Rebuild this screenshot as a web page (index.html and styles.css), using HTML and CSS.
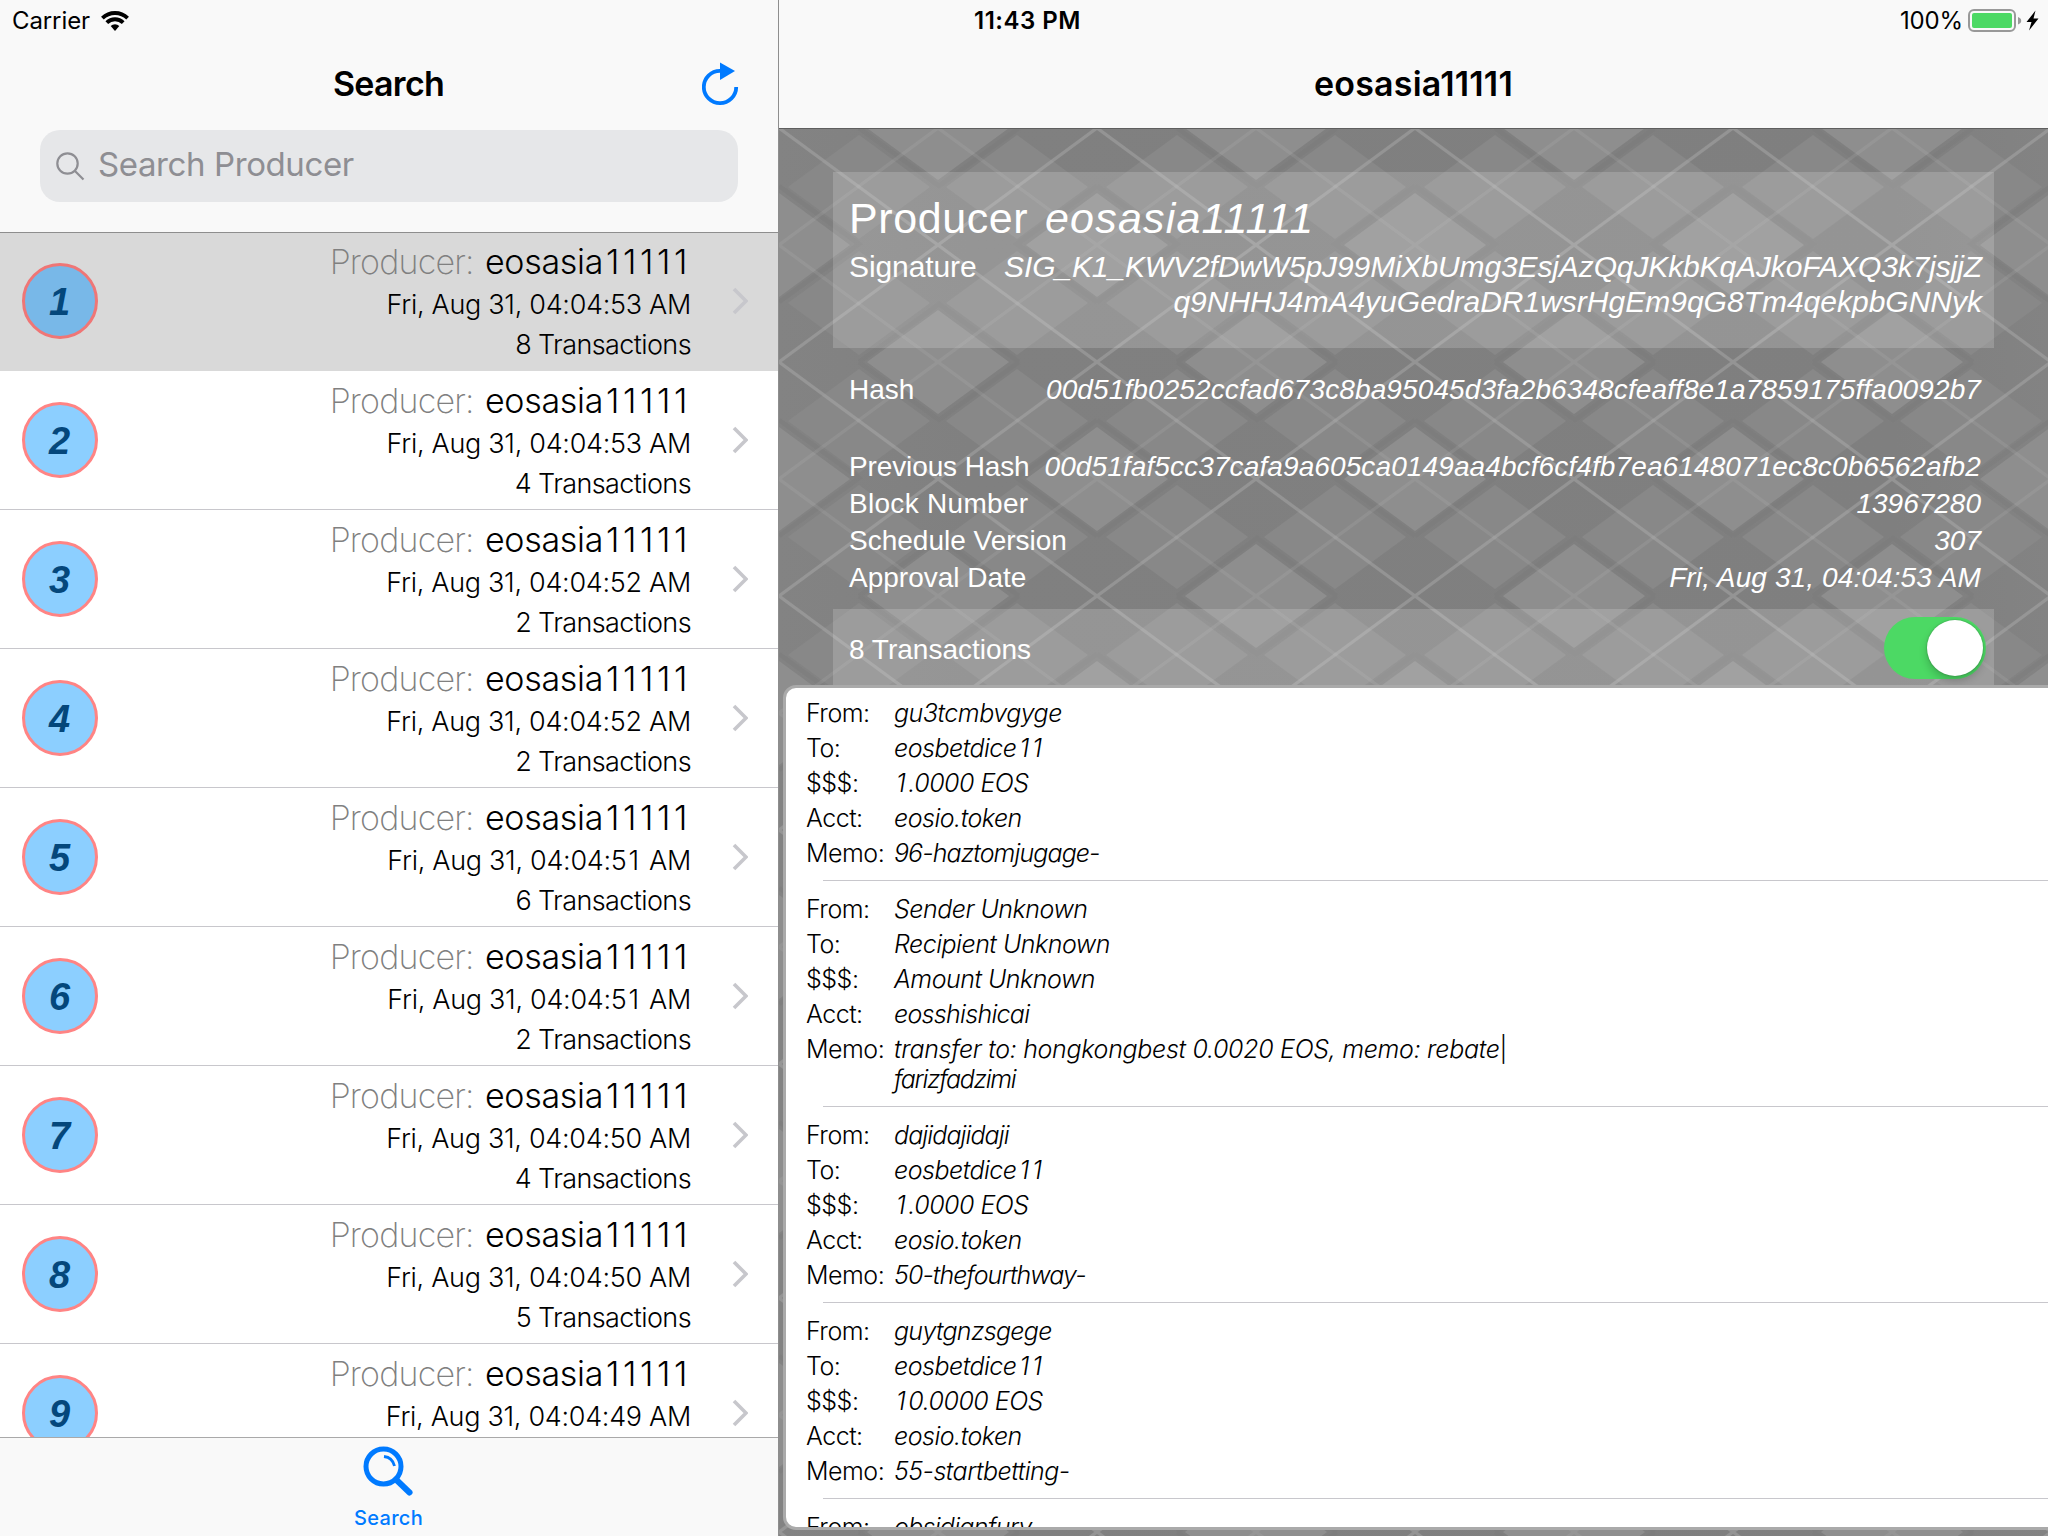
FILE: index.html
```html
<!DOCTYPE html>
<html lang="en">
<head>
<meta charset="utf-8">
<title>Block Search</title>
<link rel="stylesheet" href="styles.css">
</head>
<body>
<svg class="defs" width="0" height="0" aria-hidden="true">
  <symbol id="chevron" viewBox="0 0 16 28"><path d="M2 2l12 12L2 26" fill="none" stroke="#c7c7cc" stroke-width="3.6"/></symbol>
</svg>
<div class="app">
  <section class="master">
    <header class="master-head">
      <div class="status">
        <span class="carrier">Carrier</span>
        <svg class="wifi" viewBox="0 0 28 20"><path d="M14 20l-4.300-5a6.200 6.200 0 0 1 8.600 0z"/><path d="M5.800 11.600a11.800 11.800 0 0 1 16.400 0M1.400 7.100a18.200 18.200 0 0 1 25.200 0" fill="none" stroke="#000" stroke-width="3.900"/></svg>
      </div>
      <div class="navbar">
        <h1 class="title title-search">Search</h1>
        <svg class="refresh" viewBox="0 0 37 44"><path d="M34.200 25a16.200 16.200 0 1 1-16.200-16.200" fill="none" stroke="#007aff" stroke-width="3.800"/><path d="M18 0.500l15 8.500-15 9z" fill="#007aff"/></svg>
      </div>
      <div class="field">
        <svg class="glass" viewBox="0 0 29 29"><circle cx="11.500" cy="11.500" r="10.200"/><path d="M19 19l8.500 8.500"/></svg>
        <span class="placeholder">Search Producer</span>
      </div>
    </header>
    <ul class="blocks">
      <li class="block selected"><span class="badge">1</span><div class="info"><p class="who"><span class="tag">Producer:</span> eosasia<span class="ones">11111</span></p><p class="line">Fri, Aug 31, 04:04:53 AM</p><p class="line n">8 Transactions</p></div><svg class="chev"><use href="#chevron"/></svg></li>
      <li class="block"><span class="badge">2</span><div class="info"><p class="who"><span class="tag">Producer:</span> eosasia<span class="ones">11111</span></p><p class="line">Fri, Aug 31, 04:04:53 AM</p><p class="line n">4 Transactions</p></div><svg class="chev"><use href="#chevron"/></svg></li>
      <li class="block"><span class="badge">3</span><div class="info"><p class="who"><span class="tag">Producer:</span> eosasia<span class="ones">11111</span></p><p class="line">Fri, Aug 31, 04:04:52 AM</p><p class="line n">2 Transactions</p></div><svg class="chev"><use href="#chevron"/></svg></li>
      <li class="block"><span class="badge">4</span><div class="info"><p class="who"><span class="tag">Producer:</span> eosasia<span class="ones">11111</span></p><p class="line">Fri, Aug 31, 04:04:52 AM</p><p class="line n">2 Transactions</p></div><svg class="chev"><use href="#chevron"/></svg></li>
      <li class="block"><span class="badge">5</span><div class="info"><p class="who"><span class="tag">Producer:</span> eosasia<span class="ones">11111</span></p><p class="line">Fri, Aug 31, 04:04:5<span class="one">1</span> AM</p><p class="line n">6 Transactions</p></div><svg class="chev"><use href="#chevron"/></svg></li>
      <li class="block"><span class="badge">6</span><div class="info"><p class="who"><span class="tag">Producer:</span> eosasia<span class="ones">11111</span></p><p class="line">Fri, Aug 31, 04:04:5<span class="one">1</span> AM</p><p class="line n">2 Transactions</p></div><svg class="chev"><use href="#chevron"/></svg></li>
      <li class="block"><span class="badge">7</span><div class="info"><p class="who"><span class="tag">Producer:</span> eosasia<span class="ones">11111</span></p><p class="line">Fri, Aug 31, 04:04:50 AM</p><p class="line n">4 Transactions</p></div><svg class="chev"><use href="#chevron"/></svg></li>
      <li class="block"><span class="badge">8</span><div class="info"><p class="who"><span class="tag">Producer:</span> eosasia<span class="ones">11111</span></p><p class="line">Fri, Aug 31, 04:04:50 AM</p><p class="line n">5 Transactions</p></div><svg class="chev"><use href="#chevron"/></svg></li>
      <li class="block"><span class="badge">9</span><div class="info"><p class="who"><span class="tag">Producer:</span> eosasia<span class="ones">11111</span></p><p class="line">Fri, Aug 31, 04:04:49 AM</p></div><svg class="chev"><use href="#chevron"/></svg></li>
    </ul>
    <footer class="tabbar">
      <svg class="tab-icon" viewBox="0 0 50 52"><circle cx="20.500" cy="20.500" r="17.500" fill="none" stroke="#007aff" stroke-width="5"/><path d="M33 33.500l13.500 13" stroke="#007aff" stroke-width="6" stroke-linecap="round"/><path d="M21 10.500q8.500 1 10.500 9.500" fill="none" stroke="#007aff" stroke-width="2.800"/></svg>
      <span class="tab-label">Search</span>
    </footer>
  </section>

  <section class="detail">
    <header class="detail-head">
      <div class="status">
        <span class="clock">11:43 PM</span>
        <div class="power">
          <span class="percent">100%</span>
          <svg class="battery" viewBox="0 0 72 24"><rect x="1" y="1" width="46" height="21" rx="5" fill="none" stroke="#999" stroke-width="2"/><rect x="4" y="4" width="40" height="15" rx="2" fill="#4cd964"/><path d="M50 8q3.200 1.200 3.200 3.700T50 15.500z" fill="#999"/><path d="M67.500 1.500L58.500 13h5l-2.500 8.500 9.500-12h-5z"/></svg>
        </div>
      </div>
      <h1 class="title title-detail">eosasia11111</h1>
    </header>
    <div class="canvas">
      <svg class="argyle" aria-hidden="true">
        <defs>
          <linearGradient id="shade" x1="0" y1="0" x2="1" y2="0"><stop offset="0" stop-color="#838383"/><stop offset=".15" stop-color="#808080"/><stop offset=".88" stop-color="#7f7f7f"/><stop offset="1" stop-color="#838383"/></linearGradient>
          <pattern id="plaid" x="318" y="-1" width="318" height="234" patternUnits="userSpaceOnUse">
            <g fill="#8e8e8e"><path d="M159 -52l71 52-71 52-71-52zM159 182l71 52-71 52-71-52zM0 65l71 52-71 52-71-52zM318 65l71 52-71 52-71-52z"/></g>
            <g fill="#888"><path d="M80 7l71 52-71 52-71-52zM238 7l71 52-71 52-71-52zM80 123l71 52-71 52-71-52zM238 123l71 52-71 52-71-52z"/></g>
            <g stroke="#787878" stroke-width="5" opacity=".35"><path d="M80 0l80 58 80-58M80 234l80-58 80 58M0 58l80 58-80 58M318 58l-80 58 80 58" fill="none"/></g>
            <g stroke="#b4b4b4" stroke-width="3.2" opacity=".38"><path d="M0 0L318 234M318 0L0 234"/></g>
            <g stroke="#b4b4b4" stroke-width="3.2" opacity=".17"><path d="M159 0L318 117 159 234 0 117z" fill="none"/></g>
          </pattern>
        </defs>
        <rect width="100%" height="100%" fill="url(#shade)"/>
        <rect width="100%" height="100%" fill="url(#plaid)"/>
      </svg>
      <div class="panel">
        <div class="producer"><span class="p-key">Producer</span><em class="p-val">eosasia11111</em></div>
        <div class="signature"><span class="sig-key">Signature</span><em class="sig">SIG_K1_KWV2fDwW5pJ99MiXbUmg3EsjAzQqJKkbKqAJkoFAXQ3k7jsjjZ<br><span class="sig-end">q9NHHJ4mA4yuGedraDR1wsrHgEm9qG8Tm4qekpbGNNyk</span></em></div>
      </div>
      <dl class="facts">
        <div class="fact tall"><dt>Hash</dt><dd class="hash">00d51fb0252ccfad673c8ba95045d3fa2b6348cfeaff8e1a7859175ffa0092b7</dd></div>
        <div class="fact"><dt class="prev">Previous Hash</dt><dd class="hash">00d51faf5cc37cafa9a605ca0149aa4bcf6cf4fb7ea6148071ec8c0b6562afb2</dd></div>
        <div class="fact"><dt class="block-no">Block Number</dt><dd>13967280</dd></div>
        <div class="fact"><dt>Schedule Version</dt><dd>307</dd></div>
        <div class="fact"><dt>Approval Date</dt><dd class="hash">Fri, Aug 31, 04:04:53 AM</dd></div>
      </dl>
      <div class="panel count">
        <span>8 Transactions</span>
        <span class="switch"><span class="knob"></span></span>
      </div>
      <div class="sheet">
        <dl class="tx"><dt>From:</dt><dd>gu3tcmbvgyge</dd><dt>To:</dt><dd>eosbetdice<span class="ones">11</span></dd><dt>$$$:</dt><dd><span class="one">1</span>.0000 EOS</dd><dt>Acct:</dt><dd>eosio.token</dd><dt>Memo:</dt><dd class="snug">96-haztomjugage-</dd></dl>
        <dl class="tx"><dt>From:</dt><dd>Sender Unknown</dd><dt>To:</dt><dd>Recipient Unknown</dd><dt>$$$:</dt><dd>Amount Unknown</dd><dt>Acct:</dt><dd class="mid">eosshishicai</dd><dt>Memo:</dt><dd class="memo2">transfer to: hongkongbest 0.0020 EOS, memo: rebate<span class="bar">|</span><br><span class="tight">farizfadzimi</span></dd></dl>
        <dl class="tx"><dt>From:</dt><dd class="snug">dajidajidaji</dd><dt>To:</dt><dd>eosbetdice<span class="ones">11</span></dd><dt>$$$:</dt><dd><span class="one">1</span>.0000 EOS</dd><dt>Acct:</dt><dd>eosio.token</dd><dt>Memo:</dt><dd class="snug">50-thefourthway-</dd></dl>
        <dl class="tx"><dt>From:</dt><dd class="mid">guytgnzsgege</dd><dt>To:</dt><dd>eosbetdice<span class="ones">11</span></dd><dt>$$$:</dt><dd><span class="one">1</span>0.0000 EOS</dd><dt>Acct:</dt><dd>eosio.token</dd><dt>Memo:</dt><dd>55-startbetting-</dd></dl>
        <dl class="tx"><dt>From:</dt><dd class="mid">obsidianfury</dd></dl>
      </div>
    </div>
  </section>
</div>
</body>
</html>
```
FILE: styles.css
```css
* { box-sizing: border-box; }
body, h1, p, ul, dl, dd { margin: 0; padding: 0; }
body { width: 2048px; height: 1536px; overflow: hidden; font-family: Inter, sans-serif; color: #000; background: #fff; }
.defs { position: absolute; }
.app { display: flex; width: 2048px; height: 1536px; }

.master { display: flex; flex-direction: column; width: 779px; height: 1536px; border-right: 1px solid #8e8e8e; background: #fff; }
.master-head { height: 233px; flex: none; background: #f9f9f9; border-bottom: 1px solid #8e8e8e; }
.status { display: flex; align-items: center; height: 40px; padding-top: 1px; font-size: 24px; line-height: 40px; }
.carrier { margin-left: 12px; width: 89px; letter-spacing: -.1px; white-space: nowrap; }
.wifi { width: 28px; height: 20px; }
.navbar { display: grid; grid-template-columns: 1fr auto 1fr; align-items: center; height: 90px; padding-right: 39px; }
.title { font-size: 34px; line-height: 44px; font-weight: 600; white-space: nowrap; }
.title-search { grid-column: 2; letter-spacing: -.7px; margin: -2px 0 0 38px; }
.refresh { grid-column: 3; justify-self: end; width: 37px; height: 44px; margin-top: -3px; }
.field { display: flex; align-items: center; width: 698px; height: 72px; margin-left: 40px; padding-left: 16px; border-radius: 20px; background: #e6e7e9; }
.glass { width: 29px; height: 29px; fill: none; stroke: #8e8e93; stroke-width: 2.2px; }
.placeholder { margin-left: 13px; font-size: 33px; color: #8e8e93; letter-spacing: -.4px; white-space: nowrap; margin-top: -5px; }

.blocks { flex: 1; min-height: 0; overflow: hidden; list-style: none; }
.block { display: flex; height: 139px; border-bottom: 1px solid #c8c7cc; padding-left: 22px; }
.block.selected { height: 138px; background: #d9d9d9; border-color: #d9d9d9; }
.badge { width: 76px; height: 76px; margin-top: 31px; padding-right: 1px; border: 3px solid #ff8484; border-radius: 50%; background: #8ccfff; color: #04477b; font: italic bold 38px/72px "Liberation Sans", sans-serif; text-align: center; }
.selected .badge { margin-top: 30px; background: #78b8e8; border-color: #ef7676; }
.info { flex: 1; padding-top: 10px; text-align: right; white-space: nowrap; }
.selected .info { padding-top: 9px; }
.who { height: 40px; margin-bottom: 3px; font-size: 34px; line-height: 40px; font-weight: 300; letter-spacing: -.3px; }
.who .ones { margin-left: 3px; letter-spacing: 3.6px; }
.tag { margin-right: 2px; color: #808080; font-weight: 250; letter-spacing: -.8px; }
.line { height: 40px; font-size: 27px; line-height: 40px; font-weight: 300; letter-spacing: -.3px; }
.line.n { letter-spacing: -.6px; }
.one { margin: 0 3px 0 2px; }
.chev { width: 16px; height: 28px; margin: 55px 30px 0 41px; flex: none; }
.selected .chev { margin-top: 54px; }

.tabbar { display: flex; flex-direction: column; align-items: center; flex: none; height: 99px; padding-top: 8px; border-top: 1px solid #a9a9a9; background: #f9f9f9; }
.tab-icon { width: 50px; height: 52px; margin-right: 2px; }
.tab-label { margin: 8px 1px 0 0; font-size: 20px; line-height: 24px; font-weight: 500; color: #007aff; letter-spacing: .3px; }

.detail { display: flex; flex-direction: column; width: 1269px; height: 1536px; }
.detail-head { flex: none; height: 129px; background: #f9f9f9; border-bottom: 1px solid #5f5f5f; }
.clock { width: 107px; margin-left: 195px; font-weight: 600; white-space: nowrap; letter-spacing: .5px; }
.power { display: flex; align-items: center; margin-left: auto; padding-right: 8px; }
.percent { width: 68px; letter-spacing: -.2px; }
.battery { width: 72px; height: 24px; }
.title-detail { margin-top: 22px; text-align: center; letter-spacing: .2px; }

.canvas { position: relative; flex: 1; min-height: 0; overflow: hidden; padding: 43px 54px 0; color: #fff; font-family: "Liberation Sans", sans-serif; font-size: 28px; }
.argyle { position: absolute; inset: 0; width: 100%; height: 100%; }
.panel { position: relative; height: 176px; padding: 0 12px 0 16px; background: rgba(255,255,255,.17); white-space: nowrap; }
.producer { display: flex; height: 77px; padding-top: 22px; font-size: 43px; line-height: 49px; }
.p-key { width: 196px; letter-spacing: .6px; }
.p-val { letter-spacing: 1.2px; }
.signature { display: flex; justify-content: space-between; font-size: 30px; line-height: 35px; }
.sig-key { letter-spacing: -.1px; }
.sig { text-align: right; letter-spacing: -.12px; }
.sig-end { letter-spacing: 0; }
.facts { position: relative; padding: 23px 13px 0 16px; height: 261px; }
.fact { display: flex; justify-content: space-between; height: 37px; line-height: 37px; white-space: nowrap; }
.fact.tall { height: 77px; }
.fact dd { font-style: italic; }
.fact .hash { letter-spacing: .11px; }
.prev { letter-spacing: -.12px; }
.block-no { letter-spacing: .3px; }
.count { display: flex; justify-content: space-between; height: 76px; padding: 11px 8px 0 16px; line-height: 60px; }
.switch { width: 102px; height: 62px; margin-top: -3px; padding: 3px; border-radius: 31px; background: #4cd964; }
.knob { display: block; width: 56px; height: 56px; margin-left: 40px; border-radius: 50%; background: #fff; box-shadow: 0 5px 8px rgba(0,0,0,.2), 0 0 2px rgba(0,0,0,.3); }

.sheet { position: relative; width: 1300px; height: 845px; margin-left: -50px; border: 3px solid #aaa; border-radius: 13px; background: #fff; color: #000; overflow: hidden; font-family: Inter, sans-serif; font-size: 25px; font-weight: 300; letter-spacing: -.5px; }
.tx { display: grid; grid-template-columns: 88px 1fr; margin-left: 20px; padding: 12px 0 9px; line-height: 35px; white-space: nowrap; }
.tx:first-child { padding-top: 8px; }
.tx + .tx { background: linear-gradient(#c8c7cc, #c8c7cc) 17px 0 / 100% 1px no-repeat; }
.tx dd { font-style: italic; }
.tx .ones { margin-left: 3px; letter-spacing: 3px; }
.tx .mid { letter-spacing: -.7px; }
.tx .snug { letter-spacing: -.9px; }
.tx .tight { letter-spacing: -1.3px; }
.tx .memo2 { line-height: 30px; padding: 2px 0 3px; letter-spacing: -.31px; }
.bar { font-style: normal; }
```
